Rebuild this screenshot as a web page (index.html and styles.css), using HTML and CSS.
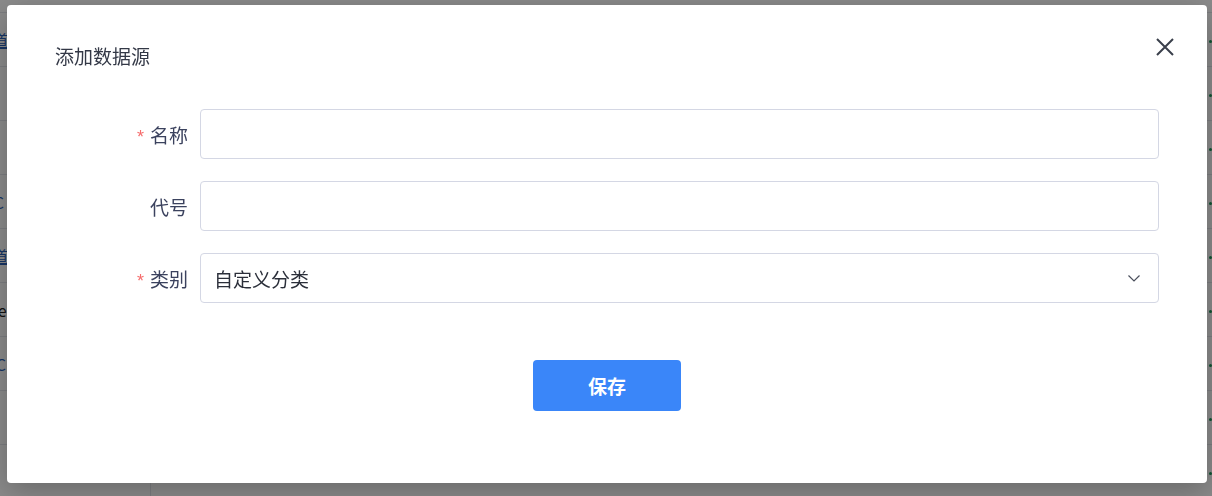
FILE: index.html
```html
<!DOCTYPE html>
<html>
<head>
    <meta charset="utf-8">
    <title>添加数据源</title>
    <link rel="stylesheet" href="styles.css">
</head>
<body>
    <div class="page">
        <div class="row"><div class="cell-first"><span class="link">知道</span></div><span class="dot"></span></div>
        <div class="row"><div class="cell-first"></div><span class="dot"></span></div>
        <div class="row"><div class="cell-first"></div><span class="dot"></span></div>
        <div class="row"><div class="cell-first"><span class="plain-link">oC</span></div><span class="dot"></span></div>
        <div class="row"><div class="cell-first"><span class="link">知道</span></div><span class="dot"></span></div>
        <div class="row"><div class="cell-first"><span class="text">ce</span></div><span class="dot"></span></div>
        <div class="row"><div class="cell-first"><span class="plain-link">OC</span></div><span class="dot"></span></div>
        <div class="row"><div class="cell-first"></div><span class="dot"></span></div>
        <div class="row"><div class="cell-first"></div><span class="dot"></span></div>
    </div>

    <div class="mask">
        <div class="dialog">
            <div class="dialog-header">
                <span class="dialog-title">添加数据源</span>
            </div>
            <button class="dialog-close" type="button">
                <svg width="18" height="18" viewBox="0 0 18 18"><path d="M1 1L17 17M17 1L1 17" stroke="#3a3f4b" stroke-width="2" fill="none"/></svg>
            </button>

            <form class="dialog-body">
                <div class="form-item">
                    <label class="form-label"><span class="required">*</span>名称</label>
                    <input class="input" type="text">
                </div>
                <div class="form-item">
                    <label class="form-label">代号</label>
                    <input class="input" type="text">
                </div>
                <div class="form-item">
                    <label class="form-label"><span class="required">*</span>类别</label>
                    <div class="input select">
                        <span>自定义分类</span>
                        <svg width="12" height="7" viewBox="0 0 12 7"><path d="M0.5 0.5L6 6L11.5 0.5" stroke="#4a4f5c" stroke-width="1.2" fill="none"/></svg>
                    </div>
                </div>
            </form>

            <div class="dialog-footer">
                <button class="btn-primary" type="button">保存</button>
            </div>
        </div>
    </div>
</body>
</html>
```

FILE: styles.css
```css
body {
    margin: 0;
    font-family: "Noto Sans CJK SC", "Noto Sans", sans-serif;
    background-color: #fff;
    overflow: hidden;
}

/* page behind the dialog */
.page {
    padding-top: 12px;
}

.row {
    display: flex;
    justify-content: space-between;
    align-items: center;
    height: 53px;
    border-top: 1px solid #e4e6ec;
}

.cell-first {
    width: 150px;
    height: 100%;
    border-right: 1px solid #e4e6ec;
    display: flex;
    align-items: center;
    font-size: 16px;
}

.link {
    margin-left: -24px;
    color: #2860b8;
    text-decoration: underline;
}

.plain-link {
    margin-left: -16px;
    color: #2860b8;
}

.text {
    margin-left: -10px;
    color: #222;
}

.dot {
    width: 3px;
    height: 3px;
    border-radius: 50%;
    background-color: #1f9a5c;
    margin-top: 4px;
}

/* dialog */
.mask {
    position: fixed;
    inset: 0;
    background-color: rgba(0, 0, 0, 0.46);
    padding: 5px 0 0 7px;
}

.dialog {
    position: relative;
    width: 1200px;
    background-color: #fff;
    border-radius: 4px;
    box-shadow: 0 8px 30px rgba(0, 0, 0, 0.25);
}

.dialog-header {
    padding: 39px 48px 41px 48px;
}

.dialog-title {
    display: block;
    font-size: 19px;
    line-height: 24px;
    color: #333846;
}

.dialog-close {
    position: absolute;
    top: 33px;
    right: 33px;
    width: 18px;
    height: 18px;
    padding: 0;
    border: none;
    background: none;
    cursor: pointer;
}

.dialog-close svg {
    display: block;
}

.dialog-body {
    display: flex;
    flex-direction: column;
    gap: 22px;
    margin: 0;
    padding: 0 48px;
}

.form-item {
    display: flex;
    align-items: center;
}

.form-label {
    width: 145px;
    box-sizing: border-box;
    padding-right: 12px;
    text-align: right;
    font-size: 19px;
    color: #3b425e;
}

.required {
    color: #f56c6c;
    font-family: "Liberation Sans", sans-serif;
    font-size: 18px;
    margin-right: 6px;
}

.input {
    flex: 1;
    height: 50px;
    box-sizing: border-box;
    border: 1px solid #d4d7e4;
    border-radius: 4px;
    padding: 0 13px;
    font-family: inherit;
    font-size: 19px;
    color: #2b2f3a;
    outline: none;
}

.select {
    display: flex;
    align-items: center;
    justify-content: space-between;
    padding-right: 18px;
}

.select svg {
    display: block;
}

.dialog-footer {
    display: flex;
    justify-content: center;
    padding: 57px 0 72px;
}

.btn-primary {
    width: 148px;
    height: 51px;
    border: none;
    border-radius: 4px;
    background-color: #3a86f9;
    color: #fff;
    font-family: inherit;
    font-size: 19px;
    font-weight: bold;
    cursor: pointer;
}
```
